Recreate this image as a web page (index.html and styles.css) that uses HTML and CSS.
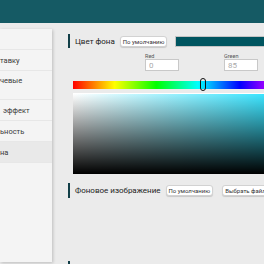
FILE: index.html
```html
<!DOCTYPE html>
<html lang="ru">
<head>
    <meta charset="UTF-8">
    <meta name="viewport" content="width=device-width, initial-scale=1.0">
    <title>Настройки</title>
    <link rel="stylesheet" href="styles.css">
</head>
<body>
    <div class="topbar"></div>

    <div class="page">
        <div class="sidebar">
            <div class="side-item"></div>
            <div class="side-item">тавку</div>
            <div class="side-item tall">чевые</div>
            <div class="side-item indent">эффект</div>
            <div class="side-item">ьность</div>
            <div class="side-item active">на</div>
        </div>

        <div class="main">
            <div class="section">
                <div class="section-head">
                    <span class="section-title">Цвет фона</span>
                    <button class="btn">По умолчанию</button>
                    <div class="swatch"></div>
                </div>

                <div class="channels">
                    <div class="channel">
                        <span class="channel-label">Red</span>
                        <input class="channel-input" type="text" value="0">
                    </div>
                    <div class="channel">
                        <span class="channel-label">Green</span>
                        <input class="channel-input" type="text" value="85">
                    </div>
                </div>

                <div class="picker">
                    <div class="hue-bar">
                        <div class="hue-handle"></div>
                    </div>
                    <div class="sv-box"></div>
                </div>
            </div>

            <div class="section second">
                <div class="section-head">
                    <span class="section-title">Фоновое изображение</span>
                    <button class="btn">По умолчанию</button>
                    <button class="btn wide">Выбрать файл</button>
                </div>
            </div>

            <div class="section third">
                <div class="section-head"></div>
            </div>
        </div>
    </div>
</body>
</html>
```

FILE: styles.css
```css
body {
    margin: 0;
    padding: 0;
    font-family: Roboto, "Noto Sans", sans-serif;
    background: #ebebeb;
    width: 264px;
    height: 264px;
    overflow: hidden;
}

.topbar {
    height: 23px;
    background: #155a64;
}

.page {
    display: flex;
    align-items: flex-start;
    padding-top: 6px;
}

.sidebar {
    flex: none;
    width: 52px;
    height: 233px;
    background: #f4f4f4;
    box-shadow: 1px 1px 3px rgba(0, 0, 0, 0.2);
    overflow: hidden;
}

.side-item {
    height: 21px;
    display: flex;
    align-items: center;
    border-bottom: 1px solid #e7e7e7;
    box-sizing: border-box;
    font-size: 7.5px;
    color: #3a3a3a;
    white-space: nowrap;
}

.side-item.tall {
    height: 29px;
    align-items: flex-start;
    padding-top: 5px;
    line-height: 10px;
}

.side-item.indent {
    padding-left: 3px;
}

.side-item.active {
    background: #e9e9e9;
}

.main {
    flex: none;
    padding: 5px 0 0 16px;
}

.section-head {
    display: flex;
    align-items: center;
    height: 14px;
    border-left: 2px solid #123f48;
    white-space: nowrap;
}

.section-title {
    padding-left: 5px;
    font-size: 8px;
    color: #222;
}

.btn {
    margin-left: 5px;
    height: 11px;
    padding: 0 2px;
    font-family: Roboto, "Noto Sans", sans-serif;
    font-size: 6px;
    line-height: 9px;
    color: #333;
    background: #fff;
    border: 1px solid #d2d2d2;
    border-radius: 3px;
    box-shadow: 0 1px 1px rgba(0, 0, 0, 0.15);
}

.btn.wide {
    margin-left: 9px;
}

.swatch {
    width: 120px;
    height: 11px;
    margin-left: 8px;
    background: #005560;
    border: 1px solid #c4c4c4;
    box-sizing: border-box;
}

.channels {
    display: flex;
    gap: 45px;
    padding-left: 77px;
    margin-top: 5px;
}

.channel {
    display: flex;
    flex-direction: column;
}

.channel-label {
    font-size: 5.5px;
    line-height: 6px;
    color: #555;
}

.channel-input {
    width: 34px;
    height: 12px;
    margin: 0;
    padding: 0 0 0 3px;
    box-sizing: border-box;
    border: 1px solid #c8c8c8;
    background: #fff;
    font-family: Roboto, "Noto Sans", sans-serif;
    font-size: 8px;
    color: #aaa;
    outline: none;
}

.picker {
    margin: 10px 0 0 5px;
}

.hue-bar {
    position: relative;
    width: 250px;
    height: 8px;
    background: linear-gradient(to right, #f00 0%, #ff0 16.67%, #0f0 33.33%, #0ff 50%, #00f 66.67%, #f0f 83.33%, #f00 100%);
}

.hue-handle {
    position: absolute;
    left: 127px;
    top: -3px;
    width: 6px;
    height: 13px;
    box-sizing: border-box;
    border: 1px solid #111;
    border-radius: 3px;
}

.sv-box {
    width: 250px;
    height: 81px;
    margin-top: 4px;
    border-top: 1px solid #fff;
    box-sizing: border-box;
    background: linear-gradient(to top, #000, rgba(0, 0, 0, 0)), linear-gradient(to right, #fff, #00dcff);
}

.second {
    margin-top: 9px;
}

.second .section-head {
    height: 15px;
}

.third {
    margin-top: 63px;
}
```
